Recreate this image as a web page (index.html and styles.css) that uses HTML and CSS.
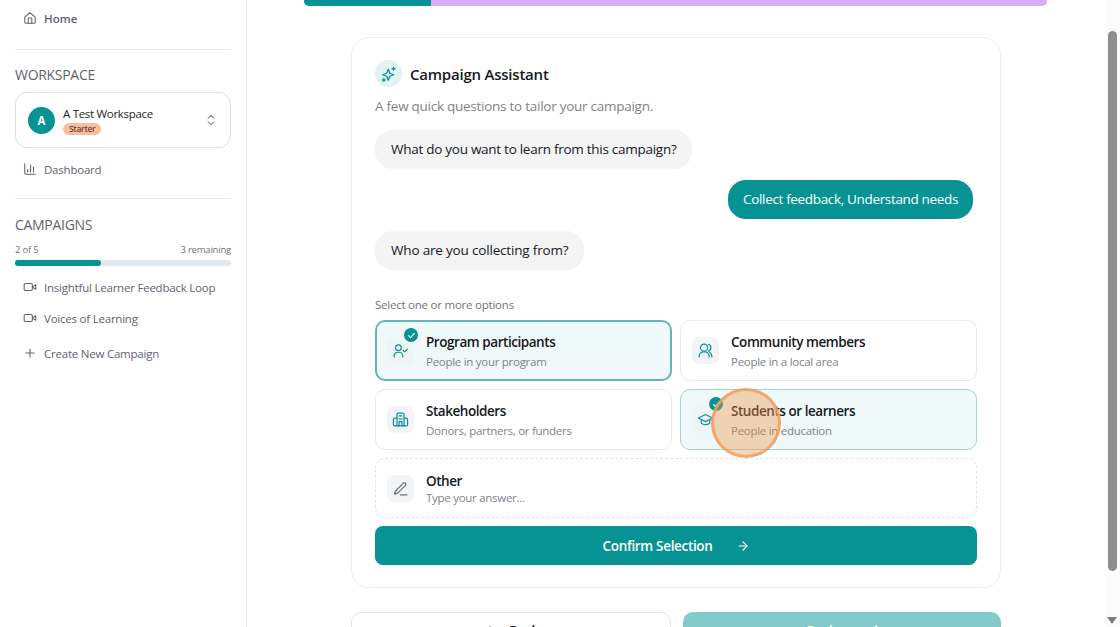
FILE: index.html
```html
<!DOCTYPE html>
<html lang="en">
<head>
  <meta charset="UTF-8" />
  <title>Campaign Assistant</title>
  <link rel="stylesheet" href="styles.css">
</head>
<body>

<aside class="sidebar">
  <a class="nav-item nav-home">
    <svg class="nav-icon" viewBox="0 0 24 24"><path d="M3 10.500 12 3l9 7.500V19a2 2 0 0 1-2 2H5a2 2 0 0 1-2-2z"/><path d="M9 21v-8a1 1 0 0 1 1-1h4a1 1 0 0 1 1 1v8"/></svg>
    Home
  </a>
  <hr class="rule rule-first">
  <h2 class="section-title">WORKSPACE</h2>
  <div class="workspace">
    <span class="avatar">A</span>
    <div class="workspace-text">
      <div class="workspace-name">A Test Workspace</div>
      <span class="plan">Starter</span>
    </div>
    <svg class="updown" viewBox="0 0 24 24"><path d="m7 9 5-5 5 5"/><path d="m7 15 5 5 5-5"/></svg>
  </div>
  <a class="nav-item nav-dash">
    <svg class="nav-icon" viewBox="0 0 24 24"><path d="M3 3v16a2 2 0 0 0 2 2h16"/><path d="M8 17v-4"/><path d="M13 17V5"/><path d="M18 17V9"/></svg>
    Dashboard
  </a>
  <hr class="rule rule-second">
  <h2 class="section-title">CAMPAIGNS</h2>
  <div class="quota"><span>2 of 5</span><span>3 remaining</span></div>
  <div class="quota-track"><div class="quota-fill"></div></div>
  <a class="nav-item nav-campaign">
    <svg class="nav-icon" viewBox="0 0 24 24"><rect x="2" y="6" width="14" height="12" rx="2"/><path d="m22 8-6 4 6 4z"/></svg>
    Insightful Learner Feedback Loop
  </a>
  <a class="nav-item nav-campaign">
    <svg class="nav-icon" viewBox="0 0 24 24"><rect x="2" y="6" width="14" height="12" rx="2"/><path d="m22 8-6 4 6 4z"/></svg>
    Voices of Learning
  </a>
  <a class="nav-item nav-create">
    <svg class="nav-icon" viewBox="0 0 24 24"><path d="M5 12h14"/><path d="M12 5v14"/></svg>
    Create New Campaign
  </a>
</aside>

<main class="content">
  <div class="steps"><div class="steps-done"></div></div>

  <section class="card">
    <div class="card-head">
      <span class="spark">
        <svg viewBox="0 0 24 24"><path d="M11 5.500 13 11l5.500 2-5.500 2-2 5.500L9 15l-5.500-2L9 11z"/><path d="M18 3v4"/><path d="M16 5h4"/><circle cx="5" cy="20" r="1.500"/></svg>
      </span>
      <h1>Campaign Assistant</h1>
    </div>
    <p class="card-sub">A few quick questions to tailor your campaign.</p>

    <div class="bubble bubble-bot bubble-first">What do you want to learn from this campaign?</div>
    <div class="bubble bubble-user">Collect feedback, Understand needs</div>
    <div class="bubble bubble-bot bubble-short">Who are you collecting from?</div>

    <div class="options-label">Select one or more options</div>
    <div class="options">
      <div class="option option-on">
        <span class="option-icon">
          <svg viewBox="0 0 24 24"><circle cx="9" cy="8" r="4"/><path d="M3 21v-1.500a5 5 0 0 1 5-5h2a5 5 0 0 1 5 5V21"/><path d="m16 12 2 2 4-4"/></svg>
          <span class="tick"><svg viewBox="0 0 24 24"><path d="m6 12.500 4 4 8-9"/></svg></span>
        </span>
        <div><div class="option-title">Program participants</div><div class="option-sub">People in your program</div></div>
      </div>
      <div class="option">
        <span class="option-icon">
          <svg viewBox="0 0 24 24"><circle cx="10" cy="8" r="5"/><path d="M3 21v-1a6 6 0 0 1 6-6h2a6 6 0 0 1 6 6v1"/><path d="M16 3.200a5 5 0 0 1 0 9.600"/><path d="M21 21v-1a6 6 0 0 0-3-5.200"/></svg>
        </span>
        <div><div class="option-title">Community members</div><div class="option-sub">People in a local area</div></div>
      </div>
      <div class="option">
        <span class="option-icon">
          <svg viewBox="0 0 24 24"><path d="M7 21V5a2 2 0 0 1 2-2h6a2 2 0 0 1 2 2v16z"/><path d="M7 10H4a2 2 0 0 0-2 2v7a2 2 0 0 0 2 2h3"/><path d="M17 10h3a2 2 0 0 1 2 2v7a2 2 0 0 1-2 2h-3"/><path d="M10 7h4"/><path d="M10 11h4"/><path d="M10 21v-6h4v6"/></svg>
        </span>
        <div><div class="option-title">Stakeholders</div><div class="option-sub">Donors, partners, or funders</div></div>
      </div>
      <div class="option option-soft">
        <span class="option-icon">
          <svg viewBox="0 0 24 24"><path d="M12 5 2 10l10 5 10-5z"/><path d="M6 12.500V17c2.500 3 9.500 3 12 0v-4.500"/></svg>
          <span class="tick"><svg viewBox="0 0 24 24"><path d="m6 12.500 4 4 8-9"/></svg></span>
        </span>
        <div><div class="option-title">Students or learners</div><div class="option-sub">People in education</div></div>
      </div>
      <div class="option option-other">
        <span class="option-icon option-icon-grey">
          <svg viewBox="0 0 24 24"><path d="M16 4.500a2.100 2.100 0 0 1 3 3L8 18.500 3.500 20l1.500-4.500z"/><path d="M12 21h9"/></svg>
        </span>
        <div><div class="option-title">Other</div><div class="option-sub option-sub-tight">Type your answer...</div></div>
      </div>
    </div>

    <button class="confirm">
      Confirm Selection
      <svg viewBox="0 0 24 24"><path d="M5 12h14"/><path d="m12 5 7 7-7 7"/></svg>
    </button>
  </section>

  <div class="actions">
    <button class="btn-back">
      <svg viewBox="0 0 24 24"><path d="M19 12H5"/><path d="m12 19-7-7 7-7"/></svg>
      Back
    </button>
    <button class="btn-next">Review and</button>
  </div>
</main>

<div class="scrollbar">
  <div class="scroll-thumb"></div>
  <div class="scroll-arrow"></div>
</div>

<div class="click-ring"></div>

</body>
</html>
```

FILE: styles.css
```css
:root {
  --teal: #079393;
  --teal-soft: #eff9f9;
  --ink: #16181d;
  --muted: #7f8389;
  --side-text: #5c6470;
  --font: 'Open Sans', 'Noto Sans', sans-serif;
}

* {
  box-sizing: border-box;
}

html, body {
  margin: 0;
  height: 627px;
  overflow: hidden;
}

body {
  display: flex;
  font-family: var(--font);
  color: var(--ink);
  background: #fff;
}

/* sidebar */
.sidebar {
  width: 247px;
  flex-shrink: 0;
  padding: 0 15px;
  border-right: 1px solid #e9ecef;
}

.nav-item {
  display: flex;
  align-items: center;
  gap: 7px;
  padding-left: 8px;
  font-size: 11.500px;
  letter-spacing: -0.220px;
  color: var(--side-text);
}

.nav-icon {
  width: 14px;
  height: 14px;
  fill: none;
  stroke: currentColor;
  stroke-width: 1.800;
  stroke-linecap: round;
  stroke-linejoin: round;
  flex-shrink: 0;
}

.nav-home {
  height: 18px;
  margin-top: 9px;
  font-weight: 600;
  letter-spacing: 0;
}

.rule {
  border: none;
  border-top: 1px solid #e9ecef;
  margin: 0;
}

.rule-first {
  margin-top: 22px;
}

.rule-second {
  margin-top: 20px;
}

.section-title {
  margin: 16px 0 0;
  font-size: 14px;
  line-height: 17px;
  font-weight: 500;
  letter-spacing: -0.300px;
  color: #5f646b;
}

.rule-second + .section-title {
  margin-top: 17px;
}

.workspace {
  display: flex;
  align-items: center;
  height: 56px;
  margin-top: 9px;
  padding: 0 12px;
  border: 1px solid #d9dee2;
  border-radius: 12px;
}

.avatar {
  width: 27px;
  height: 27px;
  border-radius: 50%;
  background: var(--teal);
  color: #fff;
  font-size: 11.500px;
  font-weight: 700;
  display: flex;
  align-items: center;
  justify-content: center;
  flex-shrink: 0;
}

.workspace-text {
  flex: 1;
  margin-left: 8px;
}

.workspace-name {
  font-size: 11.500px;
  line-height: 16px;
  letter-spacing: -0.300px;
  color: #23262b;
}

.plan {
  display: block;
  width: fit-content;
  height: 12px;
  margin-top: 1px;
  padding: 0 6px;
  border-radius: 6px;
  background: #f8bea3;
  color: #6d4633;
  font-size: 8.500px;
  line-height: 12px;
  font-weight: 600;
  letter-spacing: -0.300px;
}

.updown {
  width: 14px;
  height: 14px;
  fill: none;
  stroke: #7a8087;
  stroke-width: 1.800;
  stroke-linecap: round;
  stroke-linejoin: round;
}

.nav-dash {
  height: 18px;
  margin-top: 12px;
}

.quota {
  display: flex;
  justify-content: space-between;
  margin-top: 10px;
  font-size: 9.500px;
  line-height: 13px;
  letter-spacing: -0.200px;
  color: #6d737a;
}

.quota-track {
  height: 6px;
  margin-top: 4px;
  border-radius: 3px;
  background: #e3e8ed;
}

.quota-fill {
  width: 40%;
  height: 100%;
  border-radius: 3px;
  background: var(--teal);
}

.nav-campaign {
  height: 18px;
  margin-top: 13px;
}

.quota-track + .nav-campaign {
  margin-top: 12px;
}

.nav-create {
  height: 18px;
  margin-top: 17px;
}

/* main column */
.content {
  flex: 1;
  min-width: 0;
  padding: 0 0 0 104px;
  overflow: hidden;
}

.steps {
  width: 743px;
  height: 5.500px;
  margin-left: -47px;
  background: #d9acf8;
  border-radius: 0 0 5px 5px;
  overflow: hidden;
}

.steps-done {
  width: 127px;
  height: 100%;
  background: var(--teal);
}

.card {
  width: 650px;
  height: 551px;
  margin-top: 31.500px;
  padding: 22px 23px;
  border: 1px solid #edeff1;
  border-radius: 18px;
}

.card-head {
  display: flex;
  align-items: center;
  gap: 8px;
}

.spark {
  width: 27px;
  height: 27px;
  border-radius: 50%;
  background: #e1f3f3;
  display: flex;
  align-items: center;
  justify-content: center;
}

.spark svg {
  width: 18px;
  height: 18px;
  fill: none;
  stroke: var(--teal);
  stroke-width: 1.700;
  stroke-linecap: round;
  stroke-linejoin: round;
}

.card-head h1 {
  margin: 0;
  font-size: 15px;
  font-weight: 600;
  letter-spacing: -0.220px;
}

.card-sub {
  margin: 9px 0 0;
  font-size: 13.500px;
  line-height: 20px;
  letter-spacing: -0.260px;
  color: var(--muted);
}

.bubble {
  width: fit-content;
  height: 39px;
  padding: 0 16px;
  border-radius: 18px;
  font-size: 13.500px;
  line-height: 39px;
  letter-spacing: -0.270px;
}

.bubble-bot {
  background: #f4f4f4;
  margin-top: 12px;
}

.bubble-first {
  margin-top: 14px;
}

.bubble-short {
  letter-spacing: -0.180px;
}

.bubble-user {
  background: var(--teal);
  color: #fff;
  margin: 11px 4px 0 auto;
  padding: 0 15px;
  letter-spacing: -0.340px;
}

.options-label {
  margin-top: 27px;
  font-size: 11.500px;
  line-height: 16px;
  letter-spacing: -0.230px;
  color: #6f747a;
}

.options {
  display: grid;
  grid-template-columns: 297px 297px;
  gap: 8px;
  margin-top: 7px;
  width: 602px;
}

.option {
  display: flex;
  align-items: center;
  gap: 12px;
  height: 61px;
  padding: 0 11px;
  border: 1px solid #e8eaec;
  border-radius: 10px;
}

.option-on {
  background: var(--teal-soft);
  border: 2px solid #66b5b5;
  padding: 0 10px;
}

.option-soft {
  background: var(--teal-soft);
  border: 1px solid #a5d3d3;
}

.option-other {
  grid-column: 1 / 3;
  height: 60px;
  border: 1px dashed #e2e4e6;
}

.option-icon {
  position: relative;
  width: 27px;
  height: 27px;
  border-radius: 7px;
  background: #f3f4f5;
  display: flex;
  align-items: center;
  justify-content: center;
  flex-shrink: 0;
}

.option-on .option-icon,
.option-soft .option-icon {
  background: #eff5f5;
}

.option-icon > svg {
  width: 17px;
  height: 17px;
  fill: none;
  stroke: var(--teal);
  stroke-width: 1.700;
  stroke-linecap: round;
  stroke-linejoin: round;
}

.option-icon-grey > svg {
  stroke: #6c7177;
}

.tick {
  position: absolute;
  top: -9px;
  right: -4px;
  width: 14px;
  height: 14px;
  border-radius: 50%;
  background: var(--teal);
  display: flex;
  align-items: center;
  justify-content: center;
}

.tick svg {
  width: 11px;
  height: 11px;
  fill: none;
  stroke: #fff;
  stroke-width: 2.500;
  stroke-linecap: round;
  stroke-linejoin: round;
}

.option-title {
  font-size: 13.500px;
  line-height: 20px;
  font-weight: 600;
  letter-spacing: -0.450px;
}

.option-sub {
  margin-top: 2px;
  font-size: 11.500px;
  line-height: 16px;
  letter-spacing: -0.280px;
  color: var(--muted);
}

.option-sub-tight {
  margin-top: -1px;
}

.confirm {
  display: flex;
  align-items: center;
  justify-content: center;
  gap: 23px;
  width: 602px;
  height: 39px;
  margin-top: 8px;
  border: none;
  border-radius: 8px;
  background: var(--teal);
  color: #fff;
  font-family: var(--font);
  font-size: 13.500px;
  font-weight: 600;
  letter-spacing: -0.330px;
}

.confirm svg {
  width: 14px;
  height: 14px;
  fill: none;
  stroke: #fff;
  stroke-width: 2;
  stroke-linecap: round;
  stroke-linejoin: round;
}

.actions {
  display: flex;
  gap: 12px;
  width: 650px;
  margin-top: 24px;
}

.actions button {
  display: flex;
  align-items: center;
  justify-content: center;
  gap: 12px;
  flex: 1;
  height: 44px;
  padding: 0 0 7px;
  border-radius: 10px;
  font-family: var(--font);
  font-size: 13.500px;
  font-weight: 600;
  letter-spacing: -0.330px;
}

.btn-back {
  background: #fff;
  border: 1px solid #e3e6e8;
  color: var(--ink);
}

.btn-back svg {
  width: 14px;
  height: 14px;
  fill: none;
  stroke: var(--ink);
  stroke-width: 2;
  stroke-linecap: round;
  stroke-linejoin: round;
}

.btn-next {
  background: #83caca;
  border: none;
  color: #fff;
}

/* scrollbar */
.scrollbar {
  width: 15px;
  flex-shrink: 0;
  background: #fbfbfb;
  padding: 31px 3px 0;
}

.scroll-thumb {
  height: 540px;
  border-radius: 5px;
  background: #8f8f8f;
}

.scroll-arrow {
  width: 0;
  height: 0;
  margin: 46px 0 0 -1px;
  border-left: 5px solid transparent;
  border-right: 5px solid transparent;
  border-top: 7px solid #7e7e7e;
}

/* click highlight from the recording */
.click-ring {
  position: absolute;
  left: 711px;
  top: 388px;
  width: 70px;
  height: 70px;
  border-radius: 50%;
  background: rgba(240, 150, 80, 0.4);
  border: 3px solid rgba(240, 160, 95, 0.85);
}
```
